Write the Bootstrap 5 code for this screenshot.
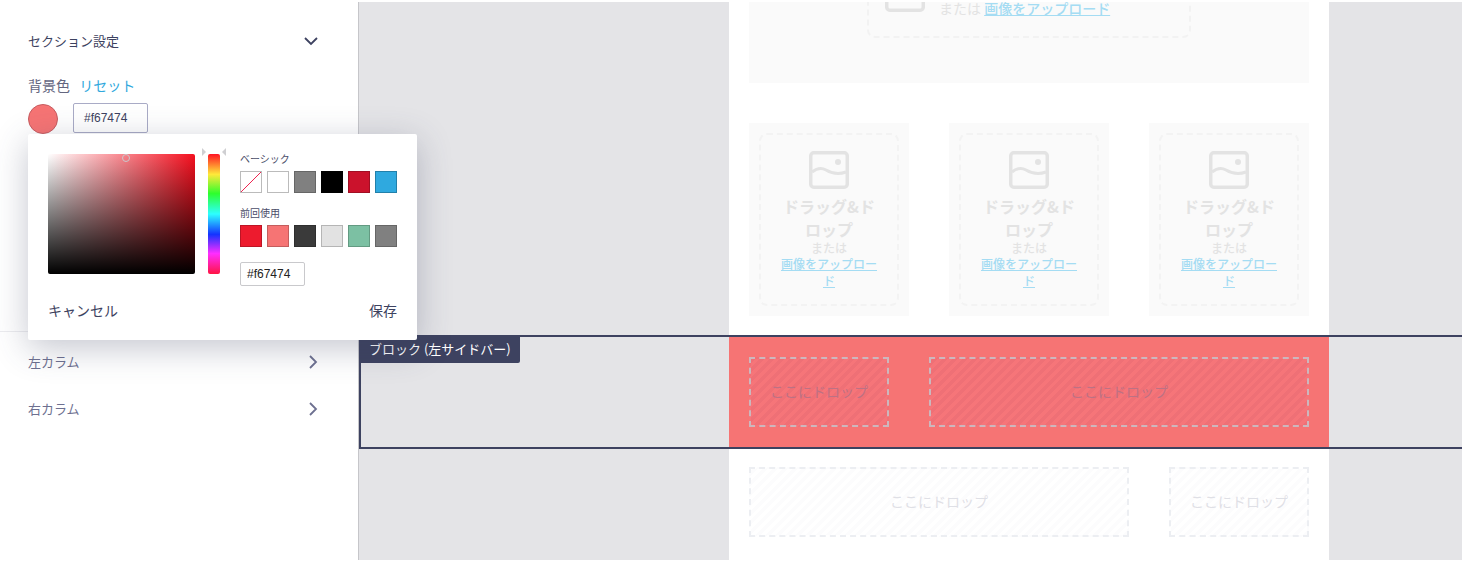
<!DOCTYPE html>
<html lang="ja">
<head>
<meta charset="utf-8">
<title>セクション設定</title>
<link rel="stylesheet" href="https://cdn.jsdelivr.net/npm/bootstrap@5.3.0/dist/css/bootstrap.min.css">
<style>
html,body{height:100%;overflow:hidden}
body{background:#fff;font-family:"Noto Sans CJK JP","Noto Sans",sans-serif;color:#3d4260}
.app-shell{height:563px;padding:2px 2px 3px 0}
.side-panel{width:359px;flex:none;border-right:1px solid #c6c6ca;position:relative;background:#fff}
.side-title{font-size:13px;line-height:20px;padding:29px 40px 0 28px}
.color-head{font-size:14px;line-height:20px;padding:24px 0 0 28px;color:#63667f}
.color-head a{color:#2fa8dd;text-decoration:none;margin-left:6px}
.color-row{padding:8px 0 0 28px;gap:15px}
.color-dot{width:30px;height:30px;border-radius:50%;background:#f67474;border:1px solid #c65c60;margin-top:1px}
.color-input{width:75px;height:30px;border:1px solid #a9abc6;border-radius:2px;font-family:"Liberation Sans",sans-serif;font-size:12px;line-height:28px;padding:0 10px;color:#3d4260;background:#fff}
.side-divider{border-top:1px solid #ececef;margin-top:197px}
.side-item{font-size:13px;line-height:20px;color:#6d7090;padding:0 40px 0 28px;height:47px}
.side-item svg{margin-top:3px}
.first-item{padding-top:20px;height:67px}
.picker{position:absolute;left:28px;top:132px;width:389px;height:206px;background:#fff;border-radius:2px;box-shadow:0 8px 34px rgba(61,66,96,.3);padding:20px;z-index:5}
.sv-box{width:147px;height:120px;flex:none;border-radius:2px;background:linear-gradient(to top,#000,rgba(0,0,0,0)),linear-gradient(to right,#fff,#f5101f);position:relative}
.sv-knob{position:absolute;left:74px;top:0;width:8px;height:8px;border:1px solid #c9c9cc;border-radius:50%}
.hue-wrap{width:24px;flex:none;margin-left:7px;position:relative;display:flex;justify-content:center}
.hue-bar{width:12px;height:120px;border-radius:2px;background:linear-gradient(to bottom,#ff1423 0,#ffe93a 17%,#2dff2d 33%,#2dffff 50%,#1433ff 67%,#ff2dff 83%,#ff1444 100%)}
.hue-arrow{position:absolute;top:-6px;width:0;height:0;border-top:4px solid transparent;border-bottom:4px solid transparent}
.hue-l{left:0;border-left:4px solid #cfcfd2}
.hue-r{right:0;border-right:4px solid #cfcfd2}
.swatch-area{margin-left:14px;width:157px;flex:none}
.swatch-label{font-size:10px;line-height:14px;color:#4a4d68;margin-top:-2px}
.label-gap{margin-top:13px}
.swatch-row{display:flex;gap:5px;margin-top:5px}
.swatch{width:22px;height:22px;border:1px solid #bbb;background:#fff;flex:none}
.s-none{background:linear-gradient(to top left,#fff 48%,#ee2450 48%,#ee2450 52%,#fff 52%)}
.s-gray{background:#808080;border-color:#666}
.s-black{background:#000;border-color:#000}
.s-crim{background:#cb122c;border-color:#a00f24}
.s-blue{background:#2fa9df;border-color:#2280aa}
.s-red{background:#ed1b2e;border-color:#bd1525}
.s-pink{background:#f67474;border-color:#c45d5d}
.s-dark{background:#3a3a3a;border-color:#2e2e2e}
.s-light{background:#e2e2e2;border-color:#b5b5b5}
.s-green{background:#7cc0a3;border-color:#639a82}
.hex-input{width:65px;height:24px;border:1px solid #c9c9cc;border-radius:2px;font-family:"Liberation Sans",sans-serif;font-size:12px;line-height:22px;padding:0 6px;color:#222;margin-top:15px}
.picker-foot{position:absolute;left:20px;right:20px;bottom:20px;font-size:14px;line-height:20px;color:#3d4260}
.canvas-area{background:#e4e4e7;overflow:hidden}
.page-col{width:600px;margin-left:370px;background:#fff}
.top-wrap{height:121px;padding:0 20px}
.top-band{height:81px;background:#fafafa;position:relative;overflow:hidden}
.top-drop{width:324px;height:60px;margin:-24px 0 0 118px;border:2px dashed #f2f2f2;border-radius:8px;padding-top:21px;gap:14px;font-size:14px;color:#e3e3e3;line-height:14px}
.top-drop a,.up-link{color:#a4dcf3;text-decoration:underline;font-weight:500}
.top-ico{width:40px;height:38px;margin-top:-27px;flex:none}
.cards-row{padding:0 20px 19px;gap:40px}
.img-card{width:160px;height:193px;background:#fafafa;padding:10px}
.img-drop{height:173px;border:2px dashed #f3f3f3;border-radius:8px;padding-top:16px;text-align:center;color:#e3e3e3}
.img-drop svg{width:40px;height:38px;display:block;margin:0 auto 6px}
.drag-text{font-size:16px;font-weight:700;line-height:23px;width:100px;margin:0 auto}
.or-text{font-size:12px;line-height:14px;font-weight:500}
.up-link{display:block;font-size:12px;line-height:17px;width:100px;margin:0 auto}
.sel-block{border:2px solid #3d4260;border-right:0;height:114px;position:relative;background:#e4e4e7}
.sel-tag{position:absolute;left:-2px;top:0;height:26px;width:161px;background:#3d4260;color:#fff;font-size:13px;line-height:23px;padding-left:10px;border-radius:0 0 2px 0}
.sel-col{margin-left:368px;width:600px;height:110px;background:#f67474;padding:20px;gap:40px}
.drop-zone{height:70px;font-size:14px;line-height:64px;text-align:center;border:2px dashed #eceef2;background:repeating-linear-gradient(-45deg,#fcfcfd 0,#fcfcfd 3.5px,#fff 3.5px,#fff 7px);color:#dfe0e6}
.sel-col .drop-zone{border-color:#cdb7bd;background:repeating-linear-gradient(-45deg,#ef7076 0,#ef7076 3.5px,#f67579 3.5px,#f67579 7px);color:#bd7184}
.zone-s{width:140px;flex:none}
.zone-m{flex:1 1 auto}
.bottom-row{padding:18px 20px 23px;gap:40px}
</style>
</head>
<body>
<div class="app-shell d-flex">
  <aside class="side-panel">
    <div class="side-title d-flex justify-content-between align-items-center">
      <span>セクション設定</span>
      <svg width="14" height="9" viewBox="0 0 14 9" fill="none" stroke="#3d4260" stroke-width="1.8"><path d="M1 1l6 6 6-6"/></svg>
    </div>
    <div class="color-head">背景色 <a href="#">リセット</a></div>
    <div class="color-row d-flex">
      <div class="color-dot"></div>
      <div class="color-input">#f67474</div>
    </div>
    <div class="side-divider"></div>
    <div class="side-item first-item d-flex justify-content-between">
      <span>左カラム</span>
      <svg width="9" height="14" viewBox="0 0 9 14" fill="none" stroke="#6d7090" stroke-width="1.8"><path d="M1 1l6 6-6 6"/></svg>
    </div>
    <div class="side-item d-flex justify-content-between">
      <span>右カラム</span>
      <svg width="9" height="14" viewBox="0 0 9 14" fill="none" stroke="#6d7090" stroke-width="1.8"><path d="M1 1l6 6-6 6"/></svg>
    </div>
    <div class="picker">
      <div class="d-flex">
        <div class="sv-box"><span class="sv-knob"></span></div>
        <div class="hue-wrap"><span class="hue-arrow hue-l"></span><div class="hue-bar"></div><span class="hue-arrow hue-r"></span></div>
        <div class="swatch-area">
          <div class="swatch-label">ベーシック</div>
          <div class="swatch-row">
            <span class="swatch s-none"></span><span class="swatch"></span><span class="swatch s-gray"></span><span class="swatch s-black"></span><span class="swatch s-crim"></span><span class="swatch s-blue"></span>
          </div>
          <div class="swatch-label label-gap">前回使用</div>
          <div class="swatch-row">
            <span class="swatch s-red"></span><span class="swatch s-pink"></span><span class="swatch s-dark"></span><span class="swatch s-light"></span><span class="swatch s-green"></span><span class="swatch s-gray"></span>
          </div>
          <div class="hex-input">#f67474</div>
        </div>
      </div>
      <div class="picker-foot d-flex justify-content-between"><span>キャンセル</span><span>保存</span></div>
    </div>
  </aside>
  <main class="canvas-area flex-grow-1">
    <div class="page-col top-wrap">
      <div class="top-band">
        <div class="top-drop d-flex">
          <svg class="top-ico ms-3" viewBox="0 0 40 38" fill="none" stroke="#e3e3e3" stroke-width="3.5"><rect x="1.75" y="1.75" width="36.5" height="34.5" rx="3"/></svg>
          <span>または <a href="#">画像をアップロード</a></span>
        </div>
      </div>
    </div>
    <div class="page-col cards-row d-flex">
      <div class="img-card"><div class="img-drop">
        <svg viewBox="0 0 40 38" fill="none" stroke="#e3e3e3" stroke-width="3.5"><rect x="1.75" y="1.75" width="36.5" height="34.5" rx="3"/><path d="M3 21c5-4 9-5 14-2s12 5 20 2" stroke-width="3"/><circle cx="29" cy="11" r="3" fill="#e3e3e3" stroke="none"/></svg>
        <div class="drag-text">ドラッグ&amp;ドロップ</div><div class="or-text">または</div><a class="up-link" href="#">画像をアップロード</a>
      </div></div>
      <div class="img-card"><div class="img-drop">
        <svg viewBox="0 0 40 38" fill="none" stroke="#e3e3e3" stroke-width="3.5"><rect x="1.75" y="1.75" width="36.5" height="34.5" rx="3"/><path d="M3 21c5-4 9-5 14-2s12 5 20 2" stroke-width="3"/><circle cx="29" cy="11" r="3" fill="#e3e3e3" stroke="none"/></svg>
        <div class="drag-text">ドラッグ&amp;ドロップ</div><div class="or-text">または</div><a class="up-link" href="#">画像をアップロード</a>
      </div></div>
      <div class="img-card"><div class="img-drop">
        <svg viewBox="0 0 40 38" fill="none" stroke="#e3e3e3" stroke-width="3.5"><rect x="1.75" y="1.75" width="36.5" height="34.5" rx="3"/><path d="M3 21c5-4 9-5 14-2s12 5 20 2" stroke-width="3"/><circle cx="29" cy="11" r="3" fill="#e3e3e3" stroke="none"/></svg>
        <div class="drag-text">ドラッグ&amp;ドロップ</div><div class="or-text">または</div><a class="up-link" href="#">画像をアップロード</a>
      </div></div>
    </div>
    <section class="sel-block">
      <div class="sel-tag">ブロック (左サイドバー)</div>
      <div class="sel-col d-flex">
        <div class="drop-zone zone-s">ここにドロップ</div>
        <div class="drop-zone zone-m">ここにドロップ</div>
      </div>
    </section>
    <div class="page-col bottom-row d-flex">
      <div class="drop-zone zone-m">ここにドロップ</div>
      <div class="drop-zone zone-s">ここにドロップ</div>
    </div>
  </main>
</div>
<script src="https://cdn.jsdelivr.net/npm/bootstrap@5.3.0/dist/js/bootstrap.bundle.min.js"></script>
</body>
</html>
